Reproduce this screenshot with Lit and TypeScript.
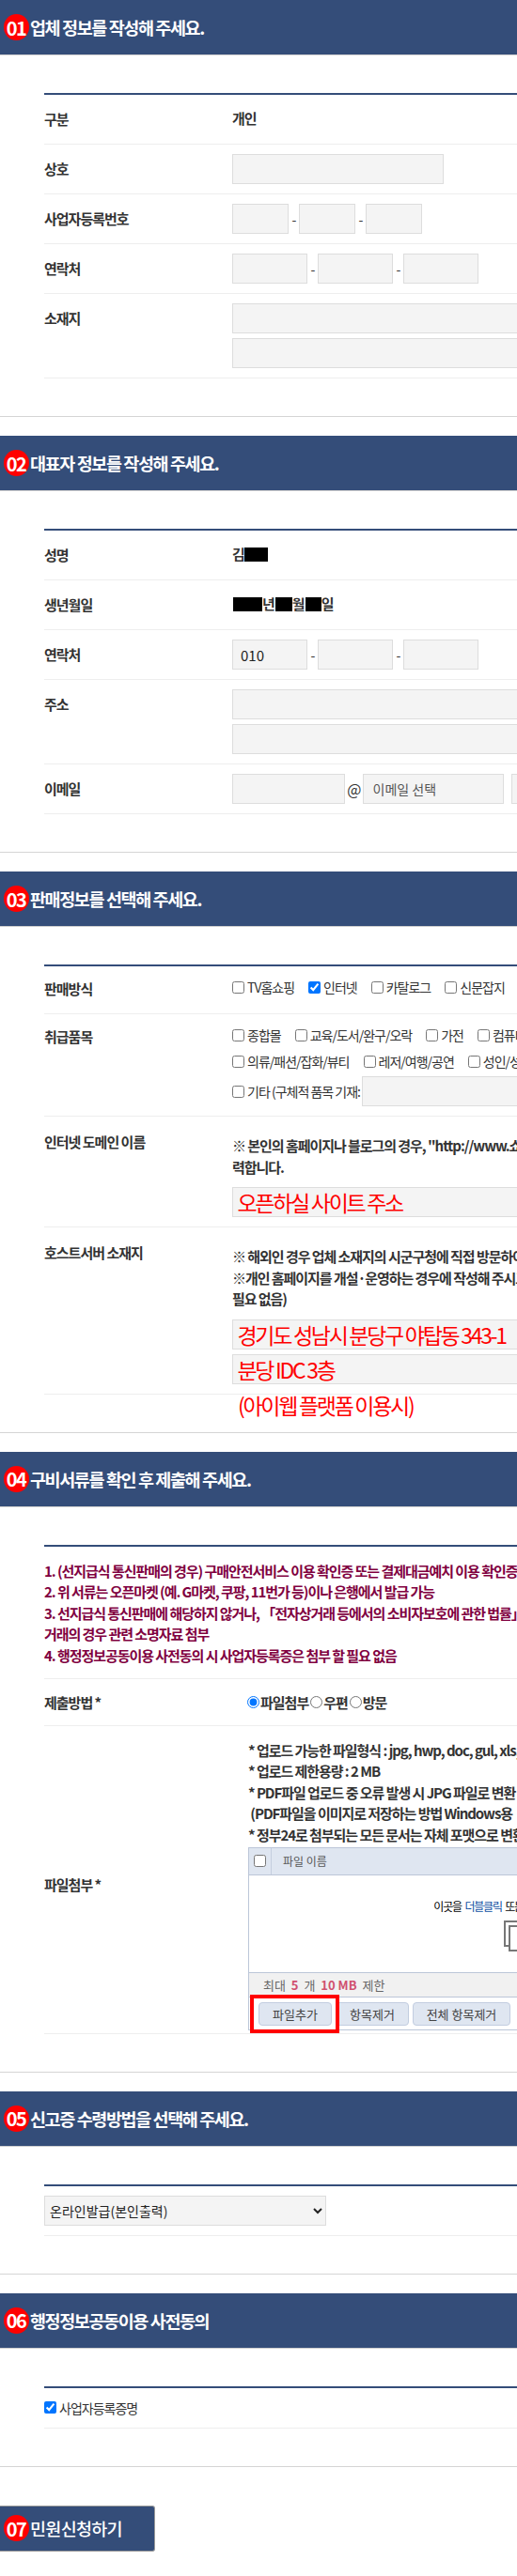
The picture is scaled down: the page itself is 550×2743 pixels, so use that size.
import { LitElement, html, css } from 'lit';
import { customElement } from 'lit/decorators.js';

@customElement('app-root')
export class AppRoot extends LitElement {
  static styles = css`
    :host {
      display: block;
      width: 550px;
      height: 2743px;
      overflow: hidden;
      background: #fff;
      font-family: 'Noto Sans CJK KR', 'Noto Sans', sans-serif;
      font-size: 15px;
      color: #333;
    }
    .page {
      width: 1000px;
    }
    .section {
      border-bottom: 1px solid #d5d5d5;
      margin-bottom: 20px;
      padding-bottom: 40px;
    }
    .head {
      display: flex;
      align-items: center;
      gap: 1.5px;
      height: 58px;
      padding-left: 3.5px;
      background: #344d79;
      border-bottom: 1px solid #d0d0d0;
      color: #fff;
      font-size: 18.5px;
      font-weight: 700;
      letter-spacing: -1.4px;
    }
    .badge {
      display: flex;
      align-items: center;
      justify-content: center;
      flex: none;
      width: 27px;
      height: 28px;
      border-radius: 50%;
      background: #f00;
      color: #fff;
      font-size: 20px;
      font-weight: 700;
      letter-spacing: -1.5px;
    }
    .table {
      margin: 40px 0 0 47px;
      border-top: 2px solid #344d79;
    }
    .row {
      display: grid;
      grid-template-columns: 200px 1fr;
      padding: 10px 0;
      border-bottom: 1px solid #eee;
      position: relative;
    }
    .row.sale {
      padding: 8px 0 10px;
    }
    .row.text {
      padding: 11px 0 10px;
    }
    .row.center {
      align-items: center;
    }
    .row.flat {
      display: block;
    }
    .label {
      font-weight: 700;
      letter-spacing: -1px;
      line-height: 32px;
      color: #333;
    }
    .value {
      font-weight: 700;
      letter-spacing: -1px;
      line-height: 30px;
      color: #333;
      white-space: nowrap;
    }
    .redact {
      display: inline-block;
      height: 15px;
      background: #000;
      vertical-align: -2px;
    }
    .w25 { width: 25px; }
    .w31 { width: 31px; margin-left: 1px; }
    .w18 { width: 18px; margin-left: 1px; }
    .w17 { width: 17px; margin-left: 1px; }
    .line {
      display: flex;
      align-items: center;
      height: 32px;
      white-space: nowrap;
    }
    .line + .line {
      margin-top: 5px;
    }
    .dash {
      width: 11px;
      text-align: center;
      flex: none;
      font-size: 14px;
      font-weight: 400;
      line-height: 1;
    }
    input.box,
    select.box {
      box-sizing: border-box;
      height: 32px;
      border: 1px solid #ddd;
      background: #f4f4f4;
      font: inherit;
      font-family: 'Noto Sans CJK KR', sans-serif;
      font-weight: 400;
      letter-spacing: 0;
      color: #222;
      padding: 0 8px;
      margin: 0;
      flex: none;
      border-radius: 0;
      outline: none;
    }
    .w225 { width: 225px; }
    .w60 { width: 60px; }
    .w80 { width: 80px; }
    .wfull { width: 500px; }
    .w120 { width: 120px; }
    .at {
      width: 18.5px;
      text-align: center;
      font-size: 16px;
      font-weight: 400;
      flex: none;
    }
    select.box.mail {
      width: 150px;
      appearance: none;
      padding-left: 10px;
      font-size: 14px;
      color: #555;
    }
    input.box.mail2 {
      width: 150px;
      margin-left: 8.5px;
      font-size: 14px;
      color: #555;
    }
    input.box.red {
      color: #f00;
      font-size: 23px;
      letter-spacing: -2.3px;
      padding: 0 4.5px;
    }
    .checks {
      display: flex;
      align-items: center;
      height: 27px;
      font-size: 14px;
      font-weight: 400;
      letter-spacing: -1px;
      white-space: nowrap;
      line-height: 27px;
    }
    .sale .checks {
      height: 28px;
    }
    .checks.last {
      height: 32px;
      margin-top: 2px;
    }
    .checks label {
      display: flex;
      align-items: center;
      gap: 3px;
      margin-right: 15px;
    }
    .checks input.box {
      margin-left: -13px;
      width: 300px;
    }
    input[type='checkbox'],
    input[type='radio'] {
      margin: 0;
      flex: none;
    }
    .para {
      font-size: 15px;
      font-weight: 700;
      letter-spacing: -1.05px;
      line-height: 22.5px;
      white-space: nowrap;
      color: #333;
    }
    .para.pad {
      margin: 9px 0 10px;
    }
    .para p {
      margin: 0;
    }
    .note {
      position: absolute;
      left: 206px;
      top: 100%;
      color: #f00;
      font-size: 23px;
      letter-spacing: -2.3px;
      line-height: 24px;
      white-space: nowrap;
    }
    .row.list {
      padding: 15px 0 12.5px;
    }
    .row.list .para {
      color: #800040;
    }
    .row.method {
      padding: 9px 0 8px;
    }
    .radios {
      display: flex;
      align-items: center;
      height: 32px;
      padding-left: 16px;
      font-weight: 700;
      letter-spacing: -1px;
    }
    .radios label {
      display: flex;
      align-items: center;
      gap: 1px;
      margin-right: 2px;
    }
    .row.file {
      padding: 15px 0 3px;
    }
    .filebox {
      margin-left: 17px;
    }
    .panel {
      position: relative;
      width: 576px;
      border: 1px solid #bcc6d8;
      margin-top: 1.5px;
      box-sizing: border-box;
      font-weight: 400;
      letter-spacing: 0;
      font-size: 13px;
    }
    .p-head {
      display: flex;
      height: 28px;
      background: #dfe6f1;
      border-bottom: 1px solid #bcc6d8;
      color: #555;
    }
    .p-check {
      display: flex;
      align-items: center;
      justify-content: center;
      width: 23px;
      border-right: 1px solid #c5cede;
    }
    .p-name {
      padding-left: 12px;
      line-height: 28px;
      font-size: 12px;
    }
    .p-body {
      display: flex;
      flex-direction: column;
      align-items: center;
      height: 104px;
      padding-top: 22px;
      box-sizing: border-box;
      color: #000;
      font-size: 12px;
      letter-spacing: -1.2px;
      word-spacing: 2px;
      line-height: 22px;
      border-bottom: 1px solid #bcc6d8;
    }
    .p-body b {
      color: #0b4ea2;
      font-weight: 400;
    }
    .p-body svg {
      margin: 4px 0 0 2px;
    }
    .p-limit {
      height: 25px;
      background: #f1f1f1;
      border-bottom: 1px solid #bcc6d8;
      padding-left: 15px;
      line-height: 25px;
      color: #666;
    }
    .p-limit b {
      color: #d0506f;
      font-weight: 700;
      margin: 0 3px;
    }
    .p-btns {
      display: flex;
      gap: 4px;
      padding: 5px 10px 4px;
    }
    .p-btns button {
      height: 25px;
      padding: 0;
      border: 1px solid #c2cde0;
      border-radius: 4px;
      background: #dfe6f1;
      color: #444;
      font: inherit;
    }
    .b78 { width: 78px; }
    .b104 { width: 104px; }
    .redbox {
      position: absolute;
      left: 1px;
      bottom: -4px;
      width: 95px;
      height: 41px;
      box-sizing: border-box;
      border: 4px solid #f00;
    }
    select.box.receipt {
      width: 300px;
      font-size: 14px;
      padding-left: 1px;
    }
    .row.agree {
      display: flex;
      align-items: center;
      gap: 3px;
      height: 42px;
      padding: 0;
      font-size: 14px;
      font-weight: 400;
      letter-spacing: -1px;
    }
    .submit {
      display: flex;
      align-items: center;
      gap: 1.5px;
      box-sizing: border-box;
      width: 165px;
      height: 49px;
      margin-top: 41px;
      padding-left: 3.5px;
      background: #344d79;
      border: 1px solid #999;
      border-left: none;
      border-radius: 0 3px 3px 0;
      color: #fff;
      font-size: 18.5px;
      font-weight: 500;
      letter-spacing: -0.7px;
    }
  `;

  private _head(no: string, title: string) {
    return html`<div class="head"><span class="badge">${no}</span><span>${title}</span></div>`;
  }

  private _row(label: string, body: unknown) {
    return html`<div class="row"><div class="label">${label}</div><div class="value">${body}</div></div>`;
  }

  private _phone(first = '') {
    return html`<div class="line">
      <input class="box w80" .value=${first} />
      <span class="dash">-</span>
      <input class="box w80" />
      <span class="dash">-</span>
      <input class="box w80" />
    </div>`;
  }

  private _address() {
    return html`<div class="line"><input class="box wfull" /></div>
      <div class="line"><input class="box wfull" /></div>`;
  }

  private _checks(items: [string, boolean?][]) {
    return items.map(
      ([name, on]) => html`<label><input type="checkbox" ?checked=${on} />${name}</label>`
    );
  }

  render() {
    return html`
      <div class="page">
        <div class="section">
          ${this._head('01', '업체 정보를 작성해 주세요.')}
          <div class="table">
            ${this._row('구분', '개인')}
            ${this._row('상호', html`<div class="line"><input class="box w225" /></div>`)}
            ${this._row(
              '사업자등록번호',
              html`<div class="line">
                <input class="box w60" />
                <span class="dash">-</span>
                <input class="box w60" />
                <span class="dash">-</span>
                <input class="box w60" />
              </div>`
            )}
            ${this._row('연락처', this._phone())}
            ${this._row('소재지', this._address())}
          </div>
        </div>

        <div class="section">
          ${this._head('02', '대표자 정보를 작성해 주세요.')}
          <div class="table">
            ${this._row('성명', html`김<span class="redact w25"></span>`)}
            ${this._row(
              '생년월일',
              html`<span class="redact w31"></span>년<span class="redact w18"></span>월<span
                  class="redact w17"
                ></span
                >일`
            )}
            ${this._row('연락처', this._phone('010'))}
            ${this._row('주소', this._address())}
            ${this._row(
              '이메일',
              html`<div class="line">
                <input class="box w120" />
                <span class="at">@</span>
                <select class="box mail"><option>이메일 선택</option></select>
                <input class="box mail2" .value=${'이메일 직접입력'} />
              </div>`
            )}
          </div>
        </div>

        <div class="section">
          ${this._head('03', '판매정보를 선택해 주세요.')}
          <div class="table">
            <div class="row sale">
              <div class="label">판매방식</div>
              <div class="checks">
                ${this._checks([['TV홈쇼핑'], ['인터넷', true], ['카탈로그'], ['신문잡지'], ['기타']])}
              </div>
            </div>
            <div class="row sale">
              <div class="label">취급품목</div>
              <div>
                <div class="checks">
                  ${this._checks([['종합몰'], ['교육/도서/완구/오락'], ['가전'], ['컴퓨터/사무용품']])}
                </div>
                <div class="checks">
                  ${this._checks([['의류/패션/잡화/뷰티'], ['레저/여행/공연'], ['성인/성인용품']])}
                </div>
                <div class="checks last">
                  ${this._checks([['기타 (구체적 품목 기재:']])}
                  <input class="box" />
                </div>
              </div>
            </div>
            <div class="row text">
              <div class="label">인터넷 도메인 이름</div>
              <div>
                <div class="para pad">
                  <p>※ 본인의 홈페이지나 블로그의 경우, "http://www.쇼핑몰주소.co.kr"를 입</p>
                  <p>력합니다.</p>
                </div>
                <input class="box wfull red" .value=${'오픈하실 사이트 주소'} />
              </div>
            </div>
            <div class="row text">
              <div class="label">호스트서버 소재지</div>
              <div>
                <div class="para pad">
                  <p>※ 해외인 경우 업체 소재지의 시군구청에 직접 방문하여 신고해 주세요.</p>
                  <p>※개인 홈페이지를 개설·운영하는 경우에 작성해 주시고</p>
                  <p>필요 없음)</p>
                </div>
                <div class="line"><input class="box wfull red" .value=${'경기도 성남시 분당구 야탑동 343-1'} /></div>
                <div class="line"><input class="box wfull red" .value=${'분당 IDC 3층'} /></div>
              </div>
              <div class="note">(아이웹 플랫폼 이용시)</div>
            </div>
          </div>
        </div>

        <div class="section">
          ${this._head('04', '구비서류를 확인 후 제출해 주세요.')}
          <div class="table">
            <div class="row flat list">
              <div class="para">
                <p>1. (선지급식 통신판매의 경우) 구매안전서비스 이용 확인증 또는 결제대금예치 이용 확인증</p>
                <p>2. 위 서류는 오픈마켓 (예. G마켓, 쿠팡, 11번가 등)이나 은행에서 발급 가능</p>
                <p>3. 선지급식 통신판매에 해당하지 않거나, 「전자상거래 등에서의 소비자보호에 관한 법률」 제</p>
                <p>거래의 경우 관련 소명자료 첨부</p>
                <p>4. 행정정보공동이용 사전동의 시 사업자등록증은 첨부 할 필요 없음</p>
              </div>
            </div>
            <div class="row method">
              <div class="label">제출방법 *</div>
              <div class="radios">
                <label><input type="radio" name="send" checked />파일첨부</label>
                <label><input type="radio" name="send" />우편</label>
                <label><input type="radio" name="send" />방문</label>
              </div>
            </div>
            <div class="row file center">
              <div class="label">파일첨부 *</div>
              <div class="filebox">
                <div class="para">
                  <p>* 업로드 가능한 파일형식 : jpg, hwp, doc, gul, xls, pdf</p>
                  <p>* 업로드 제한용량 : 2 MB</p>
                  <p>* PDF파일 업로드 중 오류 발생 시 JPG 파일로 변환</p>
                  <p>&nbsp;(PDF파일을 이미지로 저장하는 방법 Windows용</p>
                  <p>* 정부24로 첨부되는 모든 문서는 자체 포맷으로 변환</p>
                </div>
                <div class="panel">
                  <div class="p-head">
                    <div class="p-check"><input type="checkbox" /></div>
                    <div class="p-name">파일 이름</div>
                  </div>
                  <div class="p-body">
                    <div>이곳을 <b>더블클릭</b> 또는 파일을 끌어오세요</div>
                    <svg width="34" height="34" viewBox="0 0 34 34">
                      <rect x="1" y="1" width="24" height="26" fill="#fff" stroke="#777" stroke-width="2" />
                      <rect x="6" y="6" width="24" height="26" fill="#fff" stroke="#777" stroke-width="2" />
                    </svg>
                  </div>
                  <div class="p-limit">최대 <b>5</b> 개 <b>10 MB</b> 제한</div>
                  <div class="p-btns">
                    <button class="b78">파일추가</button>
                    <button class="b78">항목제거</button>
                    <button class="b104">전체 항목제거</button>
                  </div>
                  <div class="redbox"></div>
                </div>
              </div>
            </div>
          </div>
        </div>

        <div class="section">
          ${this._head('05', '신고증 수령방법을 선택해 주세요.')}
          <div class="table">
            <div class="row flat">
              <select class="box receipt"><option>온라인발급(본인출력)</option></select>
            </div>
          </div>
        </div>

        <div class="section">
          ${this._head('06', '행정정보공동이용 사전동의')}
          <div class="table">
            <label class="row agree"><input type="checkbox" checked />사업자등록증명</label>
          </div>
        </div>

        <div class="submit"><span class="badge">07</span><span>민원신청하기</span></div>
      </div>
    `;
  }
}
